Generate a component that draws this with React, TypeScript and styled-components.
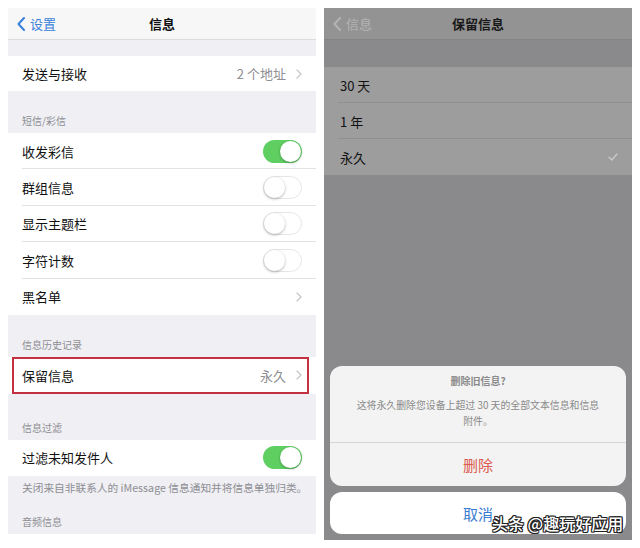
import React from "react";
import styled, { createGlobalStyle } from "styled-components";

const GlobalStyle = createGlobalStyle`
  html, body { margin: 0; padding: 0; background: #fff; }
  body { font-family: "Noto Sans CJK SC", "Noto Sans", sans-serif; }
  * { box-sizing: border-box; }
`;

const Page = styled.div`
  width: 640px;
  height: 548px;
  padding: 8px;
  display: flex;
  gap: 8px;
  align-items: flex-start;
`;

const Screen = styled.div<{ $h: number; $bg: string }>`
  position: relative;
  width: 308px;
  height: ${(p) => p.$h}px;
  background: ${(p) => p.$bg};
  overflow: hidden;
  display: flex;
  flex-direction: column;
`;

const NavBar = styled.div<{ $bg: string; $line: string }>`
  height: 32px;
  flex: none;
  background: ${(p) => p.$bg};
  border-bottom: 1px solid ${(p) => p.$line};
  display: grid;
  grid-template-columns: 1fr auto 1fr;
  align-items: center;
  padding: 0 9px;
`;

const Back = styled.div<{ $color: string }>`
  display: flex;
  align-items: center;
  gap: 5px;
  font-size: 13px;
  color: ${(p) => p.$color};
`;

const NavTitle = styled.div<{ $color: string }>`
  font-size: 13px;
  font-weight: 600;
  color: ${(p) => p.$color};
`;

const Spacer = styled.div<{ $h: number }>`
  height: ${(p) => p.$h}px;
  flex: none;
`;

const Row = styled.div<{ $h: number; $bg: string; $sep?: string; $pad?: number }>`
  position: relative;
  height: ${(p) => p.$h}px;
  flex: none;
  display: flex;
  align-items: center;
  justify-content: space-between;
  padding: 0 14px 0 ${(p) => p.$pad ?? 14}px;
  background: ${(p) => p.$bg};
  font-size: 13px;
  color: #111;
  &::after {
    content: "";
    display: ${(p) => (p.$sep ? "block" : "none")};
    position: absolute;
    left: 14px;
    right: 0;
    bottom: 0;
    height: 1px;
    background: ${(p) => p.$sep};
  }
`;

const Value = styled.div`
  display: flex;
  align-items: center;
  gap: 10px;
  color: #8e8e93;
  font-size: 13px;
`;

const SectionHeader = styled.div<{ $h: number }>`
  height: ${(p) => p.$h}px;
  flex: none;
  display: flex;
  align-items: flex-end;
  padding: 0 14px 6px;
  font-size: 10px;
  line-height: 12px;
  color: #8e8e93;
`;

const Footer = styled.div`
  height: 22px;
  flex: none;
  padding: 5px 14px 0;
  font-size: 10.7px;
  line-height: 14px;
  color: #8e8e93;
  white-space: nowrap;
`;

const Toggle = styled.span<{ $on: boolean }>`
  position: relative;
  width: 39px;
  height: 23px;
  border-radius: 12px;
  background: ${(p) => (p.$on ? "#5fcf62" : "#fff")};
  border: ${(p) => (p.$on ? "none" : "1.5px solid #e6e6e8")};
  &::after {
    content: "";
    position: absolute;
    top: ${(p) => (p.$on ? "1px" : "0")};
    left: ${(p) => (p.$on ? "17px" : "0")};
    width: 21px;
    height: 21px;
    border-radius: 50%;
    background: #fff;
    box-shadow: 0 1px 3px rgba(0, 0, 0, 0.3);
  }
`;

const Highlight = styled.div`
  position: absolute;
  left: 4px;
  right: 7px;
  top: 0;
  bottom: 0;
  border: 2px solid #c3303f;
`;

const Fill = styled.div`
  flex: 1;
`;

const Sheet = styled.div`
  position: absolute;
  left: 6px;
  right: 6px;
  top: 358px;
  display: flex;
  flex-direction: column;
  gap: 6px;
`;

const Card = styled.div<{ $bg: string; $h: number }>`
  height: ${(p) => p.$h}px;
  background: ${(p) => p.$bg};
  border-radius: 12px;
  display: flex;
  flex-direction: column;
  overflow: hidden;
`;

const SheetText = styled.div`
  height: 77px;
  padding: 8px 20px 0;
  text-align: center;
  border-bottom: 1px solid #d6d6d6;
  color: #8a8a8a;
`;

const SheetTitle = styled.div`
  font-size: 10px;
  font-weight: 600;
  line-height: 14px;
  margin-bottom: 9px;
`;

const SheetMsg = styled.div`
  font-size: 9.9px;
  line-height: 16px;
`;

const SheetButton = styled.div<{ $color: string }>`
  flex: 1;
  display: flex;
  align-items: center;
  justify-content: center;
  font-size: 15px;
  color: ${(p) => p.$color};
`;

const Watermark = styled.div`
  position: absolute;
  left: 168px;
  top: 503px;
  font-size: 16px;
  font-weight: 500;
  color: #fff;
  white-space: nowrap;
  text-shadow: -1px -1px 0 #222, 1px -1px 0 #222, -1px 1px 0 #222, 1px 1px 0 #222,
    0 1px 0 #222, 0 -1px 0 #222, 1px 0 0 #222, -1px 0 0 #222;
`;

const BackChevron = ({ color }: { color: string }) => (
  <svg width="8" height="14" viewBox="0 0 8 14">
    <path d="M7 1 L1.5 7 L7 13" fill="none" stroke={color} strokeWidth="2" strokeLinecap="round" strokeLinejoin="round" />
  </svg>
);

const Chevron = () => (
  <svg width="6" height="10" viewBox="0 0 6 10">
    <path d="M1 1 L5 5 L1 9" fill="none" stroke="#c7c7cc" strokeWidth="1.3" strokeLinecap="round" strokeLinejoin="round" />
  </svg>
);

const Check = () => (
  <svg width="10" height="8" viewBox="0 0 10 8">
    <path d="M1 4.2 L3.8 7 L9 1" fill="none" stroke="#c9c9c9" strokeWidth="1.4" strokeLinecap="round" strokeLinejoin="round" />
  </svg>
);

const SEP = "#e3e3e6";
const DIM_SEP = "#909092";

const toggles: [string, boolean][] = [
  ["收发彩信", true],
  ["群组信息", false],
  ["显示主题栏", false],
  ["字符计数", false],
];

const options = ["30 天", "1 年", "永久"];

export default function App() {
  return (
    <>
      <GlobalStyle />
      <Page>
        <Screen $h={526} $bg="#efeff4">
          <NavBar $bg="#f7f7f8" $line="#dcdcde">
            <Back $color="#3a7fd8">
              <BackChevron color="#3a7fd8" />
              设置
            </Back>
            <NavTitle $color="#111">信息</NavTitle>
            <span />
          </NavBar>
          <Spacer $h={16} />
          <Row $h={35} $bg="#fff">
            发送与接收
            <Value>
              2 个地址
              <Chevron />
            </Value>
          </Row>
          <SectionHeader $h={42}>短信/彩信</SectionHeader>
          {toggles.map(([label, on]) => (
            <Row key={label} $h={36.4} $bg="#fff" $sep={SEP}>
              {label}
              <Toggle $on={on} />
            </Row>
          ))}
          <Row $h={36.4} $bg="#fff">
            黑名单
            <Chevron />
          </Row>
          <SectionHeader $h={42}>信息历史记录</SectionHeader>
          <Row $h={37} $bg="#fff">
            保留信息
            <Value>
              永久
              <Chevron />
            </Value>
            <Highlight />
          </Row>
          <SectionHeader $h={46}>信息过滤</SectionHeader>
          <Row $h={36} $bg="#fff">
            过滤未知发件人
            <Toggle $on />
          </Row>
          <Footer>关闭来自非联系人的 iMessage 信息通知并将信息单独归类。</Footer>
          <SectionHeader $h={36}>音频信息</SectionHeader>
        </Screen>

        <Screen $h={532} $bg="#8a8a8c">
          <NavBar $bg="#939393" $line="#858585">
            <Back $color="#b3b3b3">
              <BackChevron color="#b3b3b3" />
              信息
            </Back>
            <NavTitle $color="#1a1a1a">保留信息</NavTitle>
            <span />
          </NavBar>
          <Spacer $h={27} />
          {options.map((o, i) => (
            <Row key={o} $h={36} $bg="#9d9d9d" $sep={i < 2 ? DIM_SEP : undefined} $pad={16}>
              {o}
              {i === 2 && <Check />}
            </Row>
          ))}
          <Fill />
          <Sheet>
            <Card $bg="#f3f3f3" $h={120}>
              <SheetText>
                <SheetTitle>删除旧信息?</SheetTitle>
                <SheetMsg>
                  这将永久删除您设备上超过 30 天的全部文本信息和信息
                  <br />
                  附件。
                </SheetMsg>
              </SheetText>
              <SheetButton $color="#dc5a4f">删除</SheetButton>
            </Card>
            <Card $bg="#fff" $h={42}>
              <SheetButton $color="#3b7cd0">取消</SheetButton>
            </Card>
          </Sheet>
          <Watermark>头条 @趣玩好应用</Watermark>
        </Screen>
      </Page>
    </>
  );
}
